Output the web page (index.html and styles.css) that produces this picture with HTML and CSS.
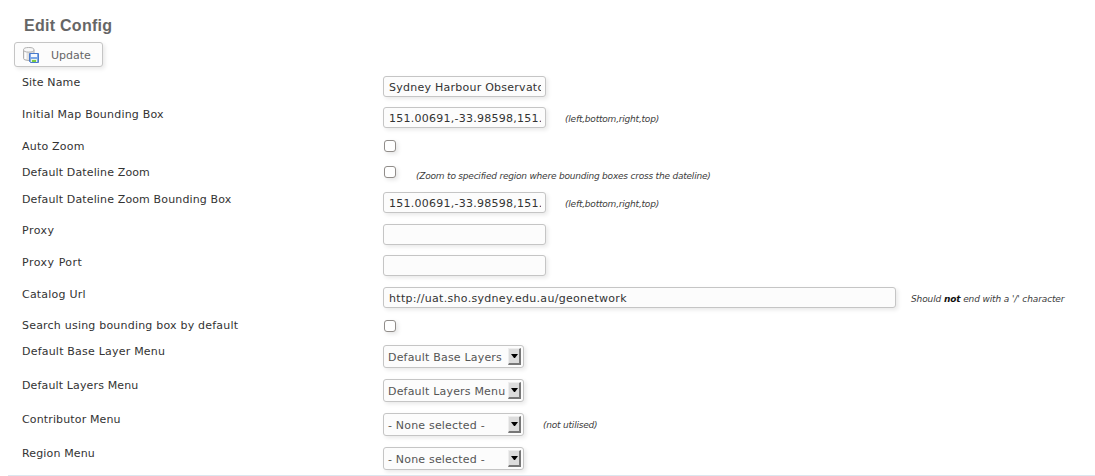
FILE: index.html
```html
<!DOCTYPE html>
<html lang="en">
<head>
<meta charset="utf-8">
<title>Edit Config</title>
<link rel="stylesheet" href="styles.css">
</head>
<body>
<main class="page">
<h1 class="title">Edit Config</h1>
<button class="update" type="button">
<svg class="icon" width="16" height="16" viewBox="0 0 16 16">
<path d="M.5 3v8.500c0 1.200 2.500 2 5.500 2s5-.8 5-2V3z" fill="#e2e2e2" stroke="#b0b0b0"/>
<path d="M2.500 5v7" stroke="#fff" stroke-width="2"/>
<ellipse cx="5.750" cy="2.800" rx="5.250" ry="2.300" fill="#f8f8f8" stroke="#b0b0b0"/>
<path d="M6.500 6.500h9v9h-8l-1-1z" fill="#7da7e6" stroke="#4a7bcb"/>
<path d="M8 7h6v3H8z" fill="#f4f9ff"/>
<path d="M8 12h6v3H8z" fill="#e8f3e1"/>
<path d="M9 13h4v2H9z" fill="#7ccb43"/>
</svg>
<span class="caption">Update</span>
</button>
<form class="form">
<div class="row h32"><label class="label">Site Name</label><div class="control"><input class="text" value="Sydney Harbour Observatory"></div></div>
<div class="row h32"><label class="label loose">Initial Map Bounding Box</label><div class="control up"><input class="text" value="151.00691,-33.98598,151.35,-33.5"><em class="note">(left,bottom,right,top)</em></div></div>
<div class="row h26"><label class="label loose">Auto Zoom</label><div class="control"><input class="check" type="checkbox"></div></div>
<div class="row h27"><label class="label">Default Dateline Zoom</label><div class="control"><input class="check" type="checkbox"><em class="note low">(Zoom to specified region where bounding boxes cross the dateline)</em></div></div>
<div class="row h31"><label class="label">Default Dateline Zoom Bounding Box</label><div class="control up"><input class="text" value="151.00691,-33.98598,151.35,-33.5"><em class="note">(left,bottom,right,top)</em></div></div>
<div class="row h32"><label class="label looser">Proxy</label><div class="control"><input class="text"></div></div>
<div class="row h32"><label class="label looser">Proxy Port</label><div class="control up"><input class="text"></div></div>
<div class="row h31"><label class="label loose">Catalog Url</label><div class="control up"><input class="text wide" value="http://uat.sho.sydney.edu.au/geonetwork"><em class="note near">Should <b>not</b> end with a '/' character</em></div></div>
<div class="row h26"><label class="label loose">Search using bounding box by default</label><div class="control down"><input class="check" type="checkbox"></div></div>
<div class="row h34"><label class="label loose">Default Base Layer Menu</label><div class="control"><div class="select"><span>Default Base Layers</span><i class="arrow"></i></div></div></div>
<div class="row h34"><label class="label">Default Layers Menu</label><div class="control"><div class="select"><span>Default Layers Menu</span><i class="arrow"></i></div></div></div>
<div class="row h34"><label class="label">Contributor Menu</label><div class="control"><div class="select"><span>- None selected -</span><i class="arrow"></i></div><em class="note">(not utilised)</em></div></div>
<div class="row h28"><label class="label">Region Menu</label><div class="control"><div class="select"><span>- None selected -</span><i class="arrow"></i></div></div></div>
</form>
</main>
</body>
</html>
```
FILE: styles.css
```css
*, *::before { box-sizing: border-box; }
body { margin: 0; background: #fff; color: #333; font: 11px/13px "DejaVu Sans", sans-serif; overflow: hidden; }
.page { height: 476px; padding: 16px 0 0 8px; }
.title { margin: 0 0 6px 16px; font: bold 16px/20px "Liberation Sans", sans-serif; letter-spacing: 0.27px; color: #666; }
.update, .text, .select { background: #fcfcfc; border: 1px solid #c5c5c5; border-radius: 3px; box-shadow: 2px 2px 4px #e9e9e9; }
.update { display: flex; align-items: center; gap: 12px; width: 89px; height: 25px; margin: 0 0 9px 6px; padding: 0 0 0 8px; font: 11px/13px "DejaVu Sans", sans-serif; color: #666; }
.icon { flex: none; }
.caption { padding-top: 2px; }
.form { display: block; margin: 0; border-bottom: 1px solid #dce6ee; }
.row { display: grid; grid-template-columns: 361px 1fr; align-items: start; padding-left: 14px; }
.h26 { height: 26px; }
.h27 { height: 27px; }
.h28 { height: 28px; }
.h31 { height: 31px; }
.h32 { height: 32px; }
.h34 { height: 34px; }
.label { letter-spacing: 0.14px; }
.loose { letter-spacing: 0.21px; }
.looser { letter-spacing: 0.5px; }
.control { display: flex; align-items: flex-start; }
.up { margin-top: -1px; }
.down { margin-top: 1px; }
.text { width: 163px; height: 21px; margin: 0; padding: 1px 4px 0 5px; font: 11px "DejaVu Sans", sans-serif; letter-spacing: 0.25px; color: #333; }
.wide { width: 513px; letter-spacing: 0.3px; }
.check { appearance: none; width: 12px; height: 12px; margin: 0 7px 0 1px; background: #fff; border: 1px solid #918d8a; border-radius: 3px; box-shadow: 2px 2px 4px #e6e6e6; }
.select { display: flex; justify-content: space-between; width: 141px; height: 23px; padding: 2px; letter-spacing: 0.19px; color: #555; }
.select span { padding: 3px 0 0 2px; white-space: nowrap; }
.arrow { width: 13px; height: 17px; background: #dcdcdc; border: 1px solid #eee; border-right: 2px solid #777; border-bottom: 2px solid #777; }
.arrow::before { content: ""; display: block; width: 7px; margin: 5px 0 0 2px; border: 3.5px solid transparent; border-top: 4px solid #000; border-bottom: 0; }
.note { margin: 6px 0 0 19px; font-size: 9px; line-height: 12px; letter-spacing: -0.21px; white-space: nowrap; color: #3c3c3c; }
.low { margin: 4px 0 0 13px; }
.near { margin-left: 15px; letter-spacing: -0.12px; }
.near b { color: #111; }
```
